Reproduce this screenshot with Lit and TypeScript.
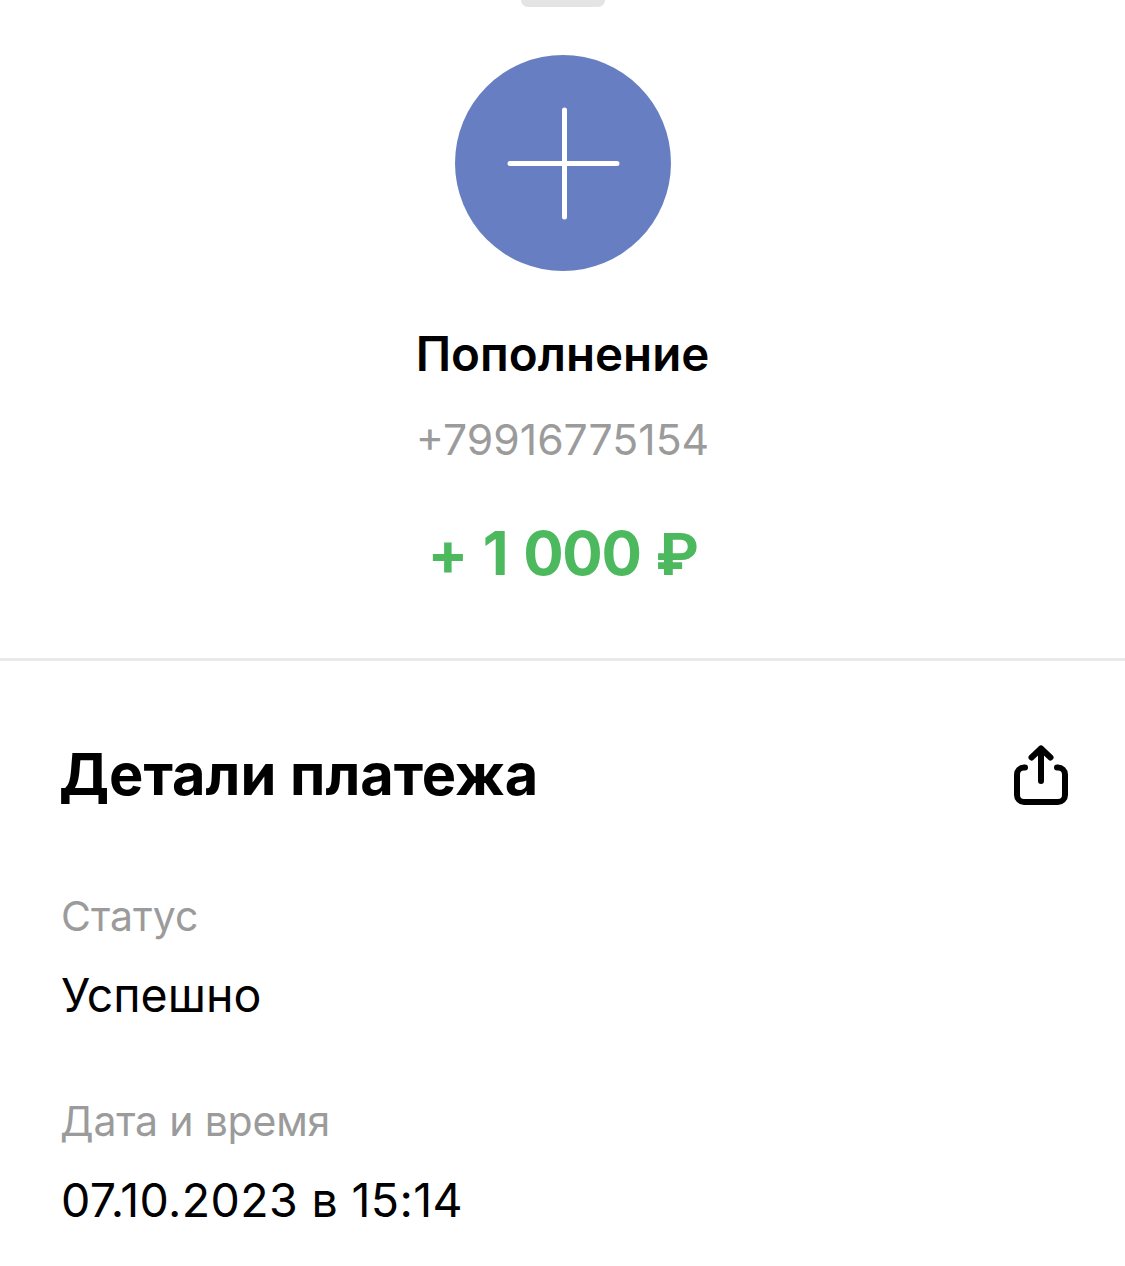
import { LitElement, html, css } from "lit";
import { customElement } from "lit/decorators.js";

@customElement("app-root")
export class AppRoot extends LitElement {
  static styles = css`
    :host {
      display: block;
      width: 1125px;
      height: 1266px;
      overflow: hidden;
      background: #fff;
      font-family: Inter, "Liberation Sans", sans-serif;
      color: #000;
    }
    .grabber {
      width: 84px;
      height: 7px;
      margin: 0 auto;
      background: #e4e4e4;
      border-radius: 0 0 9px 9px;
    }
    .summary {
      display: flex;
      flex-direction: column;
      align-items: center;
      height: 654px;
      box-sizing: border-box;
      padding-top: 48px;
      border-bottom: 3px solid #e9e9e9;
    }
    .avatar {
      display: block;
      width: 216px;
      height: 216px;
    }
    .title {
      margin-top: 56px;
      font-size: 47.5px;
      line-height: 54px;
      font-weight: 600;
    }
    .phone {
      margin-top: 32px;
      font-size: 42.7px;
      line-height: 54px;
      color: #9b9b9b;
    }
    .amount {
      margin-top: 50px;
      font-size: 60px;
      line-height: 72px;
      font-weight: 700;
      letter-spacing: -1.3px;
      word-spacing: 3px;
      color: #4cb95f;
    }
    .ruble {
      font-family: Roboto, sans-serif;
    }
    .details {
      padding: 80px 56px 0 60px;
    }
    .head {
      display: flex;
      justify-content: space-between;
      align-items: center;
      height: 70px;
    }
    h2 {
      margin: 0 0 4px -1px;
      font-size: 57.7px;
      line-height: 70px;
      font-weight: 700;
    }
    .share {
      display: block;
      width: 56px;
      height: 62px;
    }
    .field {
      display: flex;
      flex-direction: column;
    }
    .label {
      font-size: 41px;
      line-height: 52px;
      color: #9b9b9b;
    }
    .value {
      margin: 26px 0 0 1px;
      font-size: 46.5px;
      line-height: 54px;
    }
    .status {
      margin-top: 79px;
    }
    .status .label {
      margin-left: 1px;
    }
    .date {
      margin-top: 73px;
    }
    .date .label {
      letter-spacing: -0.2px;
    }
    .date .value {
      letter-spacing: 0.35px;
    }
  `;

  render() {
    return html`
      <div class="grabber"></div>
      <section class="summary">
        <svg class="avatar" viewBox="0 0 216 216">
          <circle cx="108" cy="108" r="108" fill="#677fc2" />
          <path d="M109.500 55v107M55 108.500h107" stroke="#fff" stroke-width="5" stroke-linecap="round" fill="none" />
        </svg>
        <div class="title">Пополнение</div>
        <div class="phone">+79916775154</div>
        <div class="amount">+ 1 000 <span class="ruble">₽</span></div>
      </section>
      <section class="details">
        <div class="head">
          <h2>Детали платежа</h2>
          <svg class="share" viewBox="0 0 56 62" fill="none" stroke="#000" stroke-width="6" stroke-linecap="round" stroke-linejoin="round">
            <path d="M12 22.500H11a7 7 0 0 0-7 7v20.500a7 7 0 0 0 7 7h34a7 7 0 0 0 7-7V29.500a7 7 0 0 0-7-7h-1" />
            <path d="M28 36V3.500M18.500 12.500 28 3.500l9.500 9" />
          </svg>
        </div>
        <div class="field status">
          <span class="label">Статус</span>
          <span class="value">Успешно</span>
        </div>
        <div class="field date">
          <span class="label">Дата и время</span>
          <span class="value">07.10.2023 в 15:14</span>
        </div>
      </section>
    `;
  }
}
